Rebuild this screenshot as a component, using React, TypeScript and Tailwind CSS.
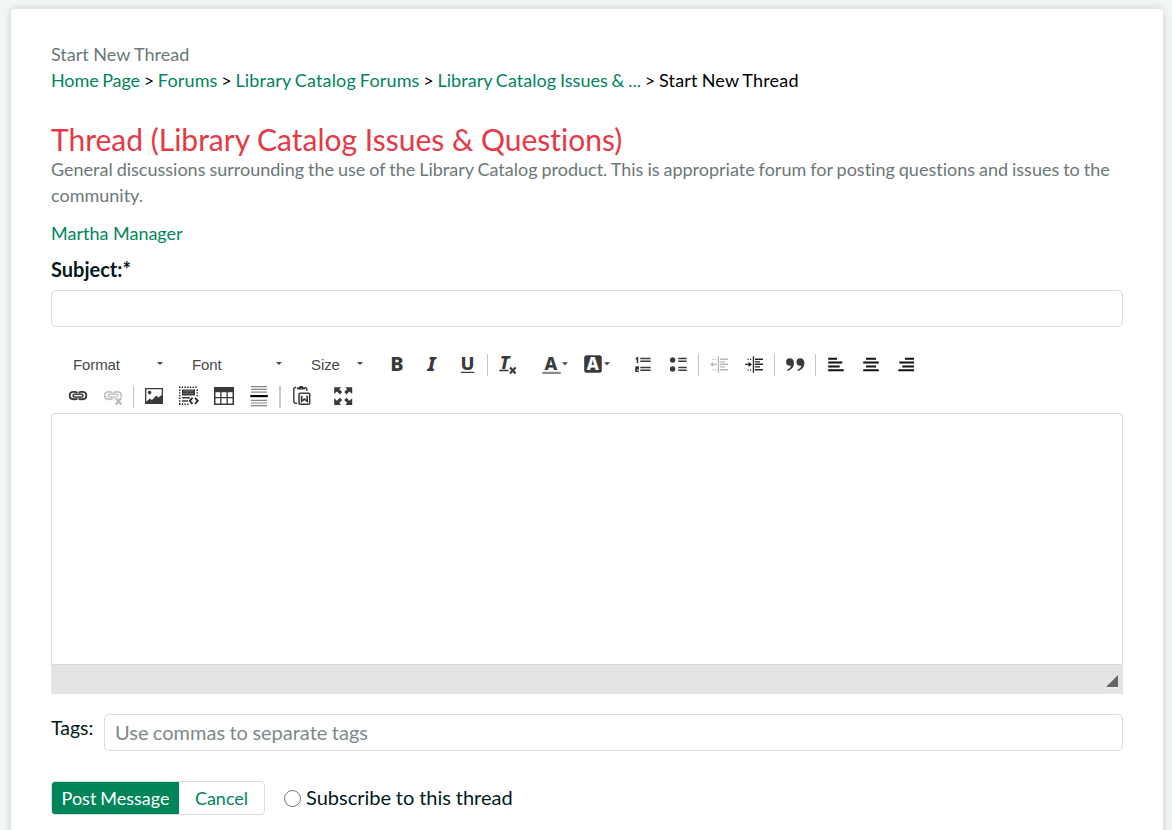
import { ReactNode } from "react";

const DARK = "#3a3a3a";
const GLYPH = { fontFamily: '"Noto Sans", sans-serif', fontWeight: 800 } as const;

function Icon({ w = 20, children }: { w?: number; children: ReactNode }) {
  return (
    <svg width={w} height="20" viewBox={`0 0 ${w} 20`} overflow="visible" fill={DARK} className="block shrink-0">
      {children}
    </svg>
  );
}

function Tool({ label, children, wide = false }: { label: string; children: ReactNode; wide?: boolean }) {
  return (
    <button type="button" aria-label={label} className={wide ? "w-[42px] shrink-0 pl-2" : "w-[35px] shrink-0 pl-2"}>
      <Icon w={wide ? 28 : 20}>{children}</Icon>
    </button>
  );
}

function Sep() {
  return (
    <div className="flex w-1.5 shrink-0 pl-0.5">
      <div className="h-[22px] w-px bg-[#c4c4c4]" />
    </div>
  );
}

function Combo({ label, small = false }: { label: string; small?: boolean }) {
  return (
    <button
      type="button"
      className={
        (small ? "w-[69px] pr-[17px] " : "w-[119px] pr-[29px] ") +
        "flex h-[22px] shrink-0 items-center justify-between text-left font-['Liberation_Sans',Arial,sans-serif] text-[15px] tracking-[-0.1px] text-[#484848]"
      }
    >
      <span>{label}</span>
      <svg width="6" height="3" viewBox="0 0 6 3" fill="#484848" className="-mt-[3px]">
        <path d="M0 0H6L3 3Z" />
      </svg>
    </button>
  );
}

function Indent({ color, inward }: { color: string; inward: boolean }) {
  return (
    <g fill={color}>
      <rect x="7.8" y="1.3" width="1.3" height="16.5" />
      <path d="M10 3.6h8v1.4h-8zM10 6.3h5v1.2h-5zM10 8.6h8V10h-8zM10 11.3h5v1.2h-5zM10 14h8v1.4h-8z" />
      <path d="M2.5 3.7h1.2v1.2H2.5zM5 3.7h1.2v1.2H5zM2.5 14.2h1.2v1.2H2.5zM5 14.2h1.2v1.2H5z" />
      {inward ? <path d="M0 8.7h3.5V6.8L7 9.4 3.5 12v-1.9H0z" /> : <path d="M7 8.7H3.2V6.8L0 9.4 3.2 12v-1.9H7z" />}
    </g>
  );
}

function Chain({ color }: { color: string }) {
  return (
    <g fill="none" stroke={color} strokeWidth="1.9">
      <path d="M8.4 6.8C7.800 6.200 7 5.900 5.800 5.900H4.500C2.200 5.900.7 7.500.7 9.600s1.500 3.700 3.800 3.700h1.300c1.200 0 2-.3 2.600-.9" />
      <path d="M9.600 6.800c.6-.6 1.400-.9 2.600-.9h1.300c2.300 0 3.800 1.600 3.800 3.700s-1.500 3.700-3.800 3.700h-1.300c-1.200 0-2-.3-2.600-.9" />
      <rect x="4.200" y="8.200" width="9.600" height="2.800" rx="1" strokeWidth="1.600" />
    </g>
  );
}

const link = "text-[#00855b]";

export default function App() {
  return (
    <div className="h-[830px] overflow-hidden bg-[#f2f7f4] pt-[9px] pr-[9px] pl-[11px] font-['Lato',sans-serif] text-[18px] leading-[26px] text-black [font-variant-ligatures:none]">
      <main className="h-[900px] rounded-[4px] bg-white px-10 pt-8 shadow-[0_0_10px_rgba(0,0,0,0.16)]">
        <div className="text-[#6b7878]">Start New Thread</div>
        <nav className="whitespace-nowrap [word-spacing:-0.9px]">
          <a className={link + " tracking-[-0.1px]"}>Home Page</a> &gt;{" "}
          <a className={link + " tracking-[0.15px]"}>Forums</a> &gt;{" "}
          <a className={link + " tracking-[0.16px]"}>Library Catalog Forums</a> &gt;{" "}
          <a className={link + " tracking-[0.04px]"}>Library Catalog Issues &amp; ...</a> &gt;{" "}
          <span className="tracking-[0.2px]">Start New Thread</span>
        </nav>

        <h1 className="mt-[29px] text-[30px] leading-[34px] text-[#e63946]">Thread (Library Catalog Issues &amp; Questions)</h1>
        <p className="text-[#6b7878] [word-spacing:-0.65px]">
          General discussions surrounding the use of the Library Catalog product. This is appropriate forum for posting
          questions and issues to the community.
        </p>
        <div className="mt-3">
          <a className={link}>Martha Manager</a>
        </div>
        <label htmlFor="subject" className="mt-2.5 block text-[20px] font-bold text-[#001a1a]">
          Subject:*
        </label>
        <input id="subject" className="mt-2 block h-[37px] w-full rounded-[5px] border border-[#dbdbdb] bg-white px-2.5 outline-none" />

        <div className="mt-[27px] flex h-[22px] pl-[22px]">
          <Combo label="Format" />
          <Combo label="Font" />
          <Combo label="Size" small />
          <Tool label="Bold">
            <text x="2.3" y="16" fontSize="20" style={GLYPH}>B</text>
          </Tool>
          <Tool label="Italic">
            <text x="4.6" y="16" fontSize="20" fontStyle="italic" style={GLYPH}>I</text>
          </Tool>
          <Tool label="Underline">
            <text x="2.6" y="14.7" fontSize="18.5" style={GLYPH}>U</text>
            <rect x="3" y="16.8" width="13.3" height="1.2" />
          </Tool>
          <Sep />
          <Tool label="Remove format">
            <text x="0.7" y="14" fontSize="18" fontStyle="italic" style={GLYPH}>T</text>
            <rect x="0.3" y="14.7" width="9.2" height="1.6" />
            <path d="M11 12.5l5.6 6M16.6 12.5l-5.6 6" stroke={DARK} strokeWidth="2.2" />
          </Tool>
          <div className="w-2 shrink-0" />
          <Tool label="Text color" wide>
            <text x="2.6" y="14.6" fontSize="18" style={GLYPH}>A</text>
            <rect x="0.3" y="16.8" width="18.5" height="2.2" fill="#8c8c8c" />
            <path d="M20 7.3h6l-3 3z" />
          </Tool>
          <Tool label="Background color" wide>
            <rect x="0.2" y="0.2" width="17.6" height="17.6" rx="2.5" />
            <text x="2.7" y="14.9" fontSize="17" fill="#fff" style={GLYPH}>A</text>
            <path d="M20 7.3h6l-3 3z" />
          </Tool>
          <div className="w-[7px] shrink-0" />
          <Tool label="Numbered list">
            <path d="M7.3 2.800h10.3v1.500H7.3zM7.3 5.600h10.3v1.500H7.3zM7.3 11.800h10.3v1.500H7.3zM7.3 14.600h10.3v1.500H7.3z" />
            <path d="M2.800 4l1.700-1.100v5.300M2.300 12.100h2.900v1.800H2.900v2.300h2.900" fill="none" stroke={DARK} strokeWidth="1.600" />
          </Tool>
          <div className="w-px shrink-0" />
          <Tool label="Bulleted list">
            <circle cx="3.6" cy="5" r="2.7" />
            <circle cx="3.6" cy="14" r="2.7" />
            <path d="M9.3 2.800h8.400v1.500H9.3zM9.3 5.600h8.400v1.500H9.3zM9.3 11.800h8.400v1.500H9.3zM9.3 14.600h8.400v1.500H9.3z" />
          </Tool>
          <Sep />
          <Tool label="Decrease indent">
            <Indent color="#b8b8b8" inward={false} />
          </Tool>
          <Tool label="Increase indent">
            <Indent color="#252525" inward />
          </Tool>
          <Sep />
          <Tool label="Block quote">
            <path d="M3.7 3.3C6.4 3.3 8 5.2 8 8c0 3.8-2.4 7-6.7 8v-1.6c2.2-.8 3.4-2.1 3.600-4-.4.2-.8.3-1.200.3C1.600 10.700 0 9.100 0 7s1.600-3.700 3.700-3.700z" />
            <path transform="translate(10.4 0)" d="M3.7 3.3C6.4 3.3 8 5.2 8 8c0 3.8-2.4 7-6.7 8v-1.6c2.2-.8 3.4-2.1 3.600-4-.4.2-.8.3-1.200.3C1.600 10.700 0 9.100 0 7s1.600-3.700 3.700-3.700z" />
          </Tool>
          <Sep />
          <Tool label="Align left">
            <path fill="#111" d="M1.200 2.700H10v2H1.200zM1.200 6.500H15.300v2H1.200zM1.200 10.400H12.700v2H1.200zM1.200 14.300H16.700v2H1.200z" />
          </Tool>
          <Tool label="Center">
            <path fill="#111" d="M4 2.700h10v2H4zM1.200 6.500h15.600v2H1.200zM4 10.400h10v2H4zM1.200 14.300h15.600v2H1.200z" />
          </Tool>
          <Tool label="Align right">
            <path fill="#111" d="M8 2.700h9v2H8zM2.300 6.500H17v2H2.300zM5.300 10.400H17v2H5.300zM1.300 14.300H17v2H1.300z" />
          </Tool>
        </div>
        <div className="mt-2.5 flex h-[22px] items-start pl-2.5">
          <Tool label="Link">
            <Chain color={DARK} />
          </Tool>
          <Tool label="Unlink">
            <Chain color="#c4c4c4" />
            <path d="M11.500 11.500l6 7M17.500 11.500l-6 7" stroke="#fff" strokeWidth="4.500" />
            <path d="M11.800 12l5.400 6.500M17.200 12l-5.400 6.500" stroke="#b9b9b9" strokeWidth="2.100" />
          </Tool>
          <Sep />
          <Tool label="Image">
            <path fillRule="evenodd" d="M0 2h18v16H0zM1.300 3.300v12.400l3.400-3.200 2.300 1.600 4.200-4.600 2.300 2 3.200-2.500V3.300z" />
            <circle cx="4.600" cy="6.600" r="1.800" />
          </Tool>
          <Tool label="Div container">
            <path d="M-1 1.300h18.500M-1 18.300h10" fill="none" stroke="#222" strokeWidth="1.400" strokeDasharray="1.400 1.300" />
            <path d="M-.3 3.500V18M17.200 3.500V11" fill="none" stroke="#222" strokeWidth="1.400" strokeDasharray="1.400 1.300" />
            <path d="M2 3.400h13v6.200H2zM2 11h8v1.600H2zM2 14.200h6v1.600H2z" />
            <path d="M3.500 5h10M3.500 7.300h10" stroke="#999" strokeWidth=".6" />
            <path d="M12.500 11.800l-2.800 3 2.800 3M15 11.800l2.800 3-2.800 3" fill="none" stroke="#222" strokeWidth="1.700" />
          </Tool>
          <Tool label="Table">
            <path
              fillRule="evenodd"
              d="M-1 1h20v18H-1zM.500 6.200v4.800h4.700V6.200zM6.500 6.200v4.800h5V6.200zM12.800 6.200v4.800h4.700V6.200zM.500 12.300v5.200h4.700v-5.200zM6.500 12.300v5.200h5v-5.200zM12.800 12.300v5.200h4.700v-5.200z"
            />
          </Tool>
          <Tool label="Horizontal line">
            <path fill="#858585" d="M1 0h16v1.200H1zM1 2.800h16V4H1zM1 5.500h16v1.200H1zM1 13.700h16v1.200H1zM1 16.400h16v1.200H1zM1 19.100h16v1.200H1z" />
            <path fill="#000" d="M.300 9h17.500v2.200H.300z" />
          </Tool>
          <div className="flex w-2 shrink-0 pl-0.5">
            <div className="h-[22px] w-0.5 bg-[#cbcbcb]" />
          </div>
          <Tool label="Paste from Word">
            <path d="M3.200 1.500H2.600C1.500 1.500.800 2.200.800 3.500v11.700c0 1.300.700 2 2 2h1.400M11.800 1.500c1.300 0 2 .700 2 2V5" fill="none" stroke={DARK} strokeWidth="1.400" />
            <path d="M4 3.500V1.300h2L6.700 0h3l.700 1.300H12v2.200z" />
            <rect x="6" y="7.200" width="10.700" height="11" rx="1" fill="#fff" stroke={DARK} strokeWidth="1.500" />
            <path d="M8.600 9.800v5.500l2.800-2.300 2.800 2.300V9.800" fill="none" stroke={DARK} strokeWidth="1.700" />
          </Tool>
          <div className="w-1.5 shrink-0" />
          <Tool label="Maximize">
            <path d="M.200 1.200h7L5.300 3.200l2.900 2.900-2.300 2.300L3 5.500.200 8z" />
            <path transform="matrix(-1 0 0 1 18.400 0)" d="M.200 1.200h7L5.300 3.200l2.900 2.900-2.300 2.300L3 5.500.200 8z" />
            <path transform="matrix(1 0 0 -1 0 20.200)" d="M.200 1.200h7L5.300 3.200l2.900 2.900-2.300 2.300L3 5.500.200 8z" />
            <path transform="matrix(-1 0 0 -1 18.400 20.200)" d="M.200 1.200h7L5.300 3.200l2.900 2.900-2.300 2.300L3 5.500.200 8z" />
          </Tool>
        </div>

        <section className="mt-[5px] flex h-[281px] flex-col rounded-t-[4px] border border-b-0 border-[#dbdbdb]">
          <div className="flex-1" contentEditable suppressContentEditableWarning />
          <div className="-mx-px flex h-[30px] justify-end border-t border-[#dadada] bg-[#e4e4e4] pt-2.5 pr-[5px]">
            <svg width="12" height="14" viewBox="0 0 12 14">
              <path d="M0 12h12v2H0z" fill="#eee" />
              <path d="M12 0v12H0z" fill="#666" />
            </svg>
          </div>
        </section>

        <div className="mt-5 flex">
          <label htmlFor="tags" className="w-[53px] shrink-0 pt-px text-[19.5px] text-[#001a1a]">
            Tags:
          </label>
          <input
            id="tags"
            placeholder="Use commas to separate tags"
            className="h-[37px] min-w-0 flex-1 rounded-[5px] border border-[#dbdbdb] bg-white px-2.5 pb-0.5 text-[20px] outline-none [word-spacing:-0.7px] placeholder:text-[#7d8989]"
          />
        </div>

        <div className="mt-[30px] flex h-[34px] items-center">
          <div className="flex h-[34px] rounded-[4px] border border-[#dbdbdb]">
            <button type="button" className="w-[127px] rounded-l-[3px] bg-[#00855b] text-white [word-spacing:-0.7px]">
              Post Message
            </button>
            <button type="button" className={"w-[85px] " + link}>
              Cancel
            </button>
          </div>
          <label className="-mt-0.5 ml-[19px] flex items-center text-[20px] text-[#001a1a] [word-spacing:-0.3px]">
            <span className="mt-[3px] mr-[5px] size-[17px] rounded-full border-[1.5px] border-[#6b7075] bg-white" />
            Subscribe to this thread
          </label>
        </div>
      </main>
    </div>
  );
}
